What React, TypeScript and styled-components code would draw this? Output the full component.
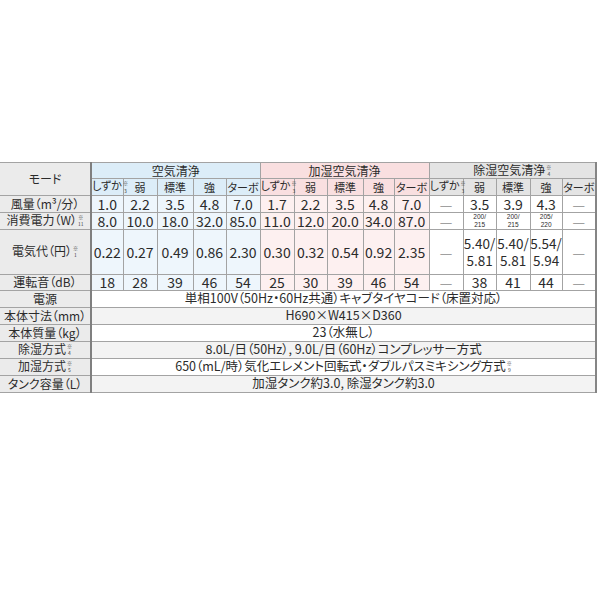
import React from 'react';
import styled, { createGlobalStyle } from 'styled-components';

const Global = createGlobalStyle`
  html, body { margin: 0; padding: 0; background: #ffffff; }
`;

const Page = styled.div`
  width: 600px;
  height: 600px;
  box-sizing: border-box;
  padding-top: 162px;
  overflow: hidden;
`;

const Table = styled.table`
  border-collapse: collapse;
  table-layout: fixed;
  width: 596px;
  font-family: "Liberation Sans Narrow", "Noto Sans CJK JP", sans-serif;
  color: #2b2b2b;
`;

const Col = styled.col<{ $w: number }>`
  width: ${(p) => p.$w}px;
`;

const Row = styled.tr<{ $h: number }>`
  height: ${(p) => p.$h}px;
`;

const Label = styled.th`
  background: #ebebeb;
  border: 1px solid #a3a3a3;
  border-left: none;
  border-right: 2px solid #7f7f7f;
  font-weight: normal;
  font-family: "Noto Sans CJK JP", sans-serif;
  font-feature-settings: "palt";
  font-size: 12px;
  line-height: 1;
  padding: 0;
  text-align: center;
  white-space: nowrap;
  color: #2b2b2b;
`;

const GroupHead = styled.th<{ $bg: string; $last?: boolean }>`
  background: ${(p) => p.$bg};
  border: 1px solid #a3a3a3;
  border-right: ${(p) => (p.$last ? '2px solid #858585' : '1px solid #a3a3a3')};
  font-weight: normal;
  font-family: "Noto Sans CJK JP", sans-serif;
  font-size: 12px;
  line-height: 1;
  padding: 0;
  text-align: center;
  white-space: nowrap;
  color: #2b2b2b;
`;

const SubHead = styled.th<{ $bg: string; $last?: boolean }>`
  background: ${(p) => p.$bg};
  border: 1px solid #a3a3a3;
  border-right: ${(p) => (p.$last ? '2px solid #858585' : '1px solid #a3a3a3')};
  font-weight: normal;
  font-family: "Noto Sans CJK JP", sans-serif;
  font-feature-settings: "palt";
  font-size: 11px;
  line-height: 1;
  padding: 0;
  text-align: center;
  white-space: nowrap;
  color: #2b2b2b;
`;

const Cell = styled.td<{ $bg: string; $muted?: boolean; $last?: boolean }>`
  background: ${(p) => p.$bg};
  border: 1px solid #a3a3a3;
  border-right: ${(p) => (p.$last ? '2px solid #858585' : '1px solid #a3a3a3')};
  padding: 0;
  text-align: center;
  font-size: 14px;
  line-height: 1;
  white-space: nowrap;
  color: ${(p) => (p.$muted ? '#a0a0a0' : '#2b2b2b')};
`;

const Wide = styled.td<{ $bg: string }>`
  background: ${(p) => p.$bg};
  border: 1px solid #a3a3a3;
  border-right: 2px solid #858585;
  padding: 0;
  text-align: center;
  font-family: "Noto Sans CJK JP", sans-serif;
  font-feature-settings: "palt";
  font-size: 12.5px;
  line-height: 1;
  white-space: nowrap;
  color: #2b2b2b;
`;

const Stack = styled.div<{ $small?: boolean }>`
  display: flex;
  flex-direction: column;
  align-items: center;
  justify-content: center;
  font-family: ${(p) => (p.$small ? '"Liberation Sans", sans-serif' : 'inherit')};
  font-size: ${(p) => (p.$small ? 6.5 : 13.5)}px;
  line-height: ${(p) => (p.$small ? 1.2 : 1.25)};
`;

const NoteMark = styled.span`
  display: inline-flex;
  flex-direction: column;
  align-items: center;
  vertical-align: top;
  font-family: "Noto Sans CJK JP", sans-serif;
  font-size: 5px;
  line-height: 1.45;
  margin-left: 1px;
  margin-top: -1px;
  color: #444;
`;

const Note = ({ n }: { n: string }) => (
  <NoteMark>
    <span>※</span>
    <span>{n}</span>
  </NoteMark>
);

type Group = { name: string; note?: string; head: string; cell: string };

const groups: Group[] = [
  { name: '空気清浄', head: '#dcedf8', cell: '#eef6fc' },
  { name: '加湿空気清浄', head: '#f9dfe0', cell: '#fdf0f0' },
  { name: '除湿空気清浄', note: '4', head: '#e4e4e4', cell: '#ffffff' },
];

const modes = ['しずか', '弱', '標準', '強', 'ターボ'];

const widths = [91, 32, 34, 36, 33, 34, 34, 33, 36, 31, 35, 34, 33, 34, 32, 34];

type Val = string | [string, string];

const dataRows: { label: React.ReactNode; h: number; small?: boolean; values: Val[] }[] = [
  {
    label: '風量（m³/分）',
    h: 17,
    values: ['1.0', '2.2', '3.5', '4.8', '7.0', '1.7', '2.2', '3.5', '4.8', '7.0', '—', '3.5', '3.9', '4.3', '—'],
  },
  {
    label: (
      <>
        消費電力（W）
        <Note n="11" />
      </>
    ),
    h: 16,
    small: true,
    values: [
      '8.0', '10.0', '18.0', '32.0', '85.0', '11.0', '12.0', '20.0', '34.0', '87.0', '—',
      ['200/', '215'], ['200/', '215'], ['205/', '220'], '—',
    ],
  },
  {
    label: (
      <>
        電気代（円）
        <Note n="1" />
      </>
    ),
    h: 45,
    values: [
      '0.22', '0.27', '0.49', '0.86', '2.30', '0.30', '0.32', '0.54', '0.92', '2.35', '—',
      ['5.40/', '5.81'], ['5.40/', '5.81'], ['5.54/', '5.94'], '—',
    ],
  },
  {
    label: '運転音（dB）',
    h: 16,
    values: ['18', '28', '39', '46', '54', '25', '30', '39', '46', '54', '—', '38', '41', '44', '—'],
  },
];

const wideRows: { label: React.ReactNode; text: React.ReactNode; bg: string }[] = [
  { label: '電源', text: '単相100V（50Hz・60Hz共通）キャブタイヤコード（床置対応）', bg: '#ffffff' },
  { label: '本体寸法（mm）', text: 'H690×W415×D360', bg: '#f3f3f3' },
  { label: '本体質量（kg）', text: '23（水無し）', bg: '#ffffff' },
  {
    label: (
      <>
        除湿方式
        <Note n="4" />
      </>
    ),
    text: '8.0L/日（50Hz）, 9.0L/日（60Hz）コンプレッサー方式',
    bg: '#f3f3f3',
  },
  {
    label: (
      <>
        加湿方式
        <Note n="5" />
      </>
    ),
    text: (
      <>
        650（mL/時）気化エレメント回転式・ダブルパスミキシング方式
        <Note n="9" />
      </>
    ),
    bg: '#ffffff',
  },
  { label: 'タンク容量（L）', text: '加湿タンク約3.0, 除湿タンク約3.0', bg: '#f3f3f3' },
];

export default function App() {
  return (
    <>
      <Global />
      <Page>
        <Table>
          <colgroup>
            {widths.map((w, i) => (
              <Col key={i} $w={w} />
            ))}
          </colgroup>
          <tbody>
            <Row $h={16}>
              <Label rowSpan={2}>モード</Label>
              {groups.map((g, gi) => (
                <GroupHead key={g.name} colSpan={5} $bg={g.head} $last={gi === 2}>
                  {g.name}
                  {g.note && <Note n={g.note} />}
                </GroupHead>
              ))}
            </Row>
            <Row $h={17}>
              {groups.map((g, gi) =>
                modes.map((m, mi) => (
                  <SubHead key={`${gi}-${mi}`} $bg={g.head} $last={gi === 2 && mi === 4}>
                    {m}
                    {mi === 0 && <Note n="3" />}
                  </SubHead>
                )),
              )}
            </Row>
            {dataRows.map((r, ri) => (
              <Row key={ri} $h={r.h}>
                <Label>{r.label}</Label>
                {r.values.map((v, vi) => {
                  const g = groups[Math.floor(vi / 5)];
                  const last = vi === 14;
                  if (Array.isArray(v)) {
                    return (
                      <Cell key={vi} $bg={g.cell} $last={last}>
                        <Stack $small={r.small}>
                          <span>{v[0]}</span>
                          <span>{v[1]}</span>
                        </Stack>
                      </Cell>
                    );
                  }
                  return (
                    <Cell key={vi} $bg={g.cell} $muted={v === '—'} $last={last}>
                      {v}
                    </Cell>
                  );
                })}
              </Row>
            ))}
            {wideRows.map((r, ri) => (
              <Row key={`w${ri}`} $h={17}>
                <Label>{r.label}</Label>
                <Wide colSpan={15} $bg={r.bg}>
                  {r.text}
                </Wide>
              </Row>
            ))}
          </tbody>
        </Table>
      </Page>
    </>
  );
}
